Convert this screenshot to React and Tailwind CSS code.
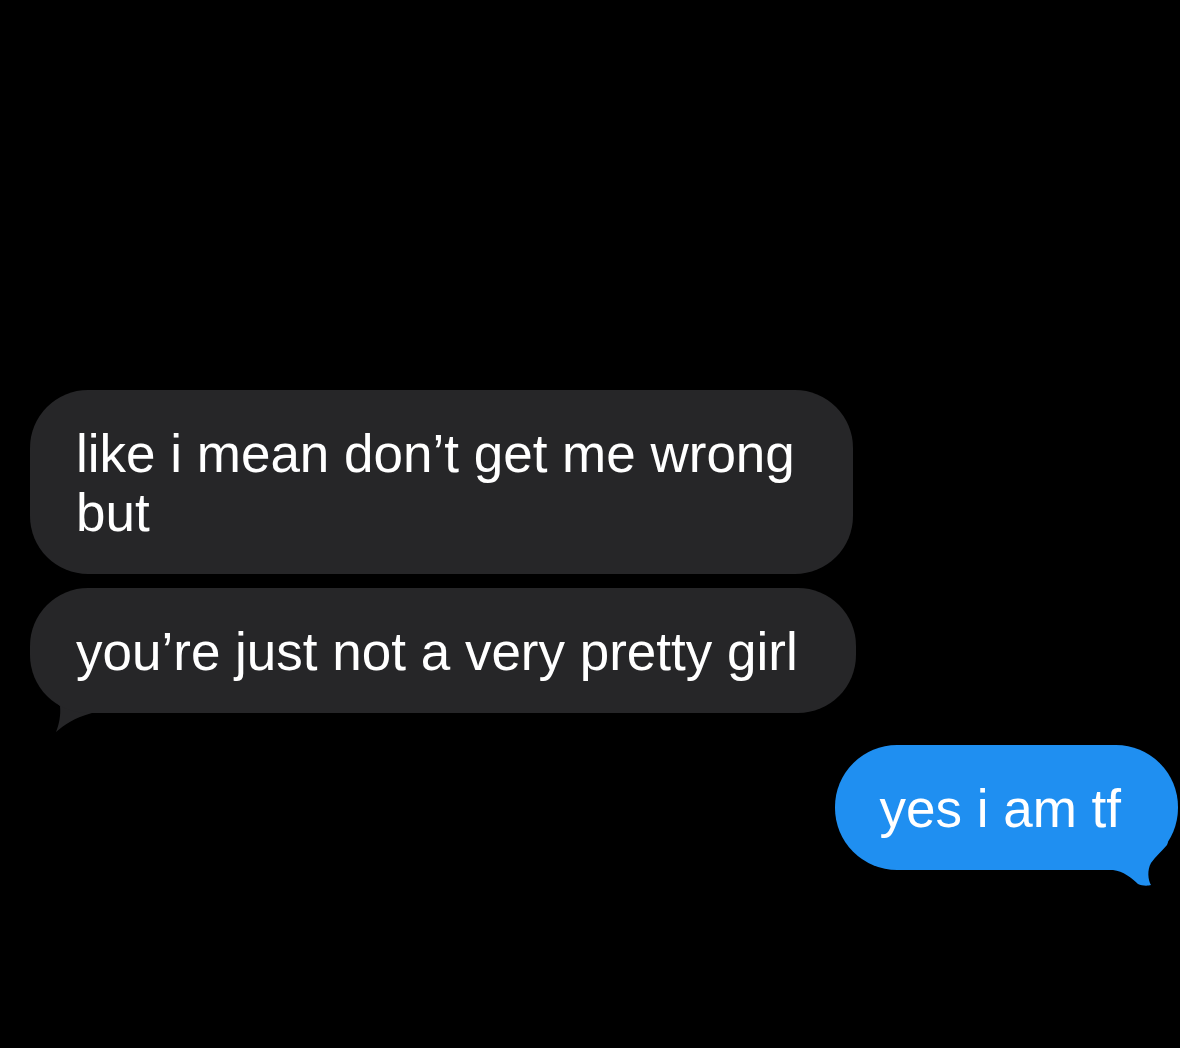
import React from 'react';

const font = { fontFamily: '"Liberation Sans", Arial, sans-serif' };

// Small downward hook under the lower-left corner of a received bubble
function IncomingTail() {
  return (
    <svg
      className="absolute left-0 bottom-[-20px] w-[80px] h-[40px]"
      viewBox="0 0 80 40"
      fill="#262628"
    >
      <path d="M18 0 C 22 6, 26 10, 30 13 C 31 22, 29 32, 26 39 C 34 32, 44 25, 62 20 L 80 20 L 80 0 Z" />
    </svg>
  );
}

// Curled tail under the lower-right corner of a sent bubble
function OutgoingTail() {
  return (
    <svg
      className="absolute right-0 bottom-[-16px] w-[80px] h-[46px]"
      viewBox="0 0 80 46"
      fill="#1f8ff1"
    >
      <path d="M0 30 L 15 30 C 25 31, 34 38, 40 44 C 44 46, 50 46, 53 45 C 50 40, 49 30, 53 23 C 57 17, 64 11, 69 5 C 70 3, 70 1, 70 0 L 0 0 Z" />
    </svg>
  );
}

function Bubble({ children, incoming, tail, className = '' }) {
  return (
    <div className={`relative ${className}`}>
      {tail && incoming && <IncomingTail />}
      <div
        className={`relative w-fit pt-[34px] pb-[32px] text-[53px] leading-[59px] text-white ${
          incoming
            ? 'bg-[#262628] rounded-[58px] pl-[46px] pr-[58px]'
            : 'bg-[#1f8ff1] rounded-[62px] pl-[44px] pr-[57px]'
        }`}
        style={font}
      >
        {children}
      </div>
      {tail && !incoming && <OutgoingTail />}
    </div>
  );
}

export default function App() {
  return (
    <div className="w-full h-[1048px] bg-black flex flex-col pt-[390px] pl-[30px] pr-[2px]">
      <Bubble incoming className="w-fit">
        like i mean don’t get me wrong
        <br />
        but
      </Bubble>
      <Bubble incoming tail className="w-fit mt-[14px]">
        you’re just not a very pretty girl
      </Bubble>
      <Bubble tail className="w-fit self-end mt-[32px]">
        yes i am tf
      </Bubble>
    </div>
  );
}
